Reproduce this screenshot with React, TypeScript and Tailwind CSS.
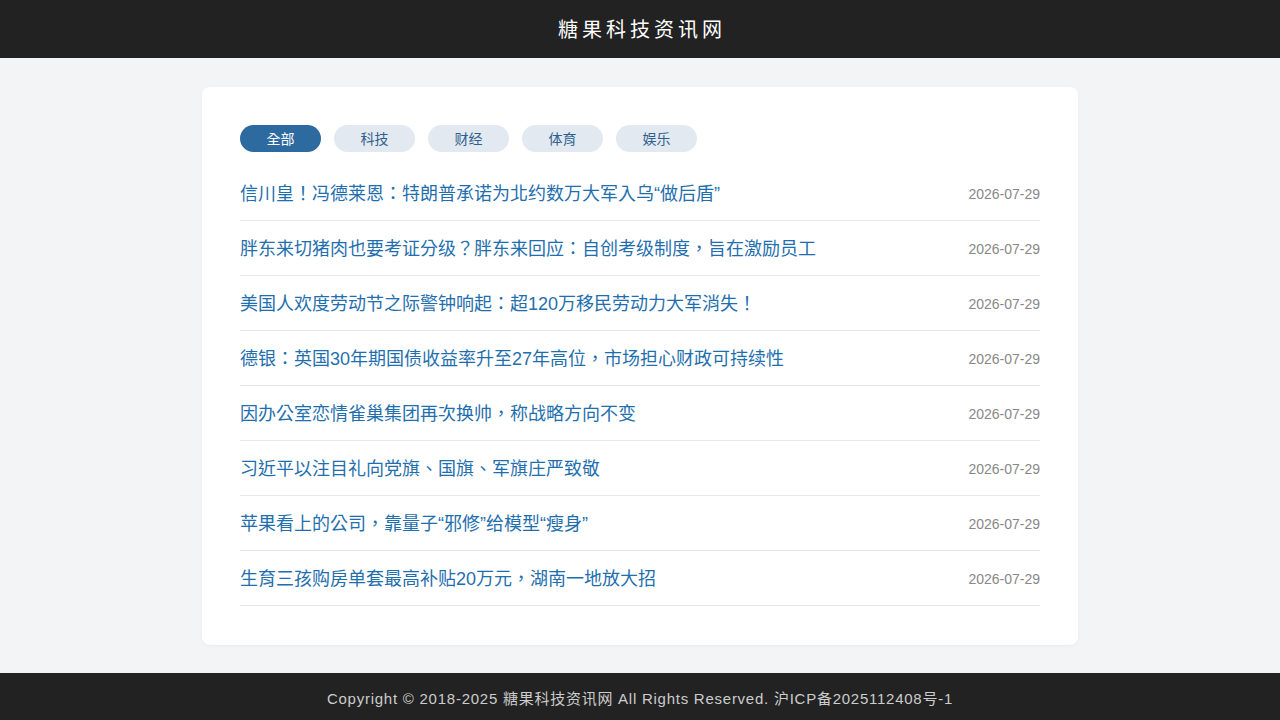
const tabs = ['全部', '科技', '财经', '体育', '娱乐'];

const news = [
  '信川皇！冯德莱恩：特朗普承诺为北约数万大军入乌“做后盾”',
  '胖东来切猪肉也要考证分级？胖东来回应：自创考级制度，旨在激励员工',
  '美国人欢度劳动节之际警钟响起：超120万移民劳动力大军消失！',
  '德银：英国30年期国债收益率升至27年高位，市场担心财政可持续性',
  '因办公室恋情雀巢集团再次换帅，称战略方向不变',
  '习近平以注目礼向党旗、国旗、军旗庄严致敬',
  '苹果看上的公司，靠量子“邪修”给模型“瘦身”',
  '生育三孩购房单套最高补贴20万元，湖南一地放大招',
];

export default function App() {
  return (
    <div className="min-h-screen flex flex-col bg-[#f3f4f6] font-['Liberation_Sans','Noto_Sans_CJK_TC',sans-serif]">
      <header className="h-[58px] bg-[#222222] flex items-center justify-center">
        <h1 className="text-white text-[20px] tracking-[4px] pt-[2px] pl-[4px]">糖果科技资讯网</h1>
      </header>

      <main className="flex-1 pt-[29px] pb-[28px] flex justify-center">
        <div className="w-[876px] bg-white rounded-lg px-[38px] pt-[38px] pb-[38px] shadow-[0_1px_3px_rgba(0,0,0,0.04)]">
          <div className="flex gap-[13px] mb-[14px]">
            {tabs.map((t, i) => (
              <button
                key={t}
                className={`w-[81px] h-[27px] rounded-full text-[14px] flex items-center justify-center pt-[1px] ${
                  i === 0 ? 'bg-[#2d6aa0] text-white' : 'bg-[#e3e9f1] text-[#2f5f8c]'
                }`}
              >
                {t}
              </button>
            ))}
          </div>
          <ul>
            {news.map((title) => (
              <li key={title} className="h-[55px] flex items-center justify-between border-b border-[#e5e7eb]">
                <a className="text-[18px] text-[#1f6fae] pt-[2px]">{title}</a>
                <span className="text-[14px] text-[#888888] pt-[2px]">2026-07-29</span>
              </li>
            ))}
          </ul>
        </div>
      </main>

      <footer className="h-[47px] bg-[#222222] flex items-center justify-center pt-[5px]">
        <p className="text-[15px] text-[#cccccc] tracking-[0.75px]">
          Copyright © 2018-2025 糖果科技资讯网 All Rights Reserved. 沪ICP备2025112408号-1
        </p>
      </footer>
    </div>
  );
}
